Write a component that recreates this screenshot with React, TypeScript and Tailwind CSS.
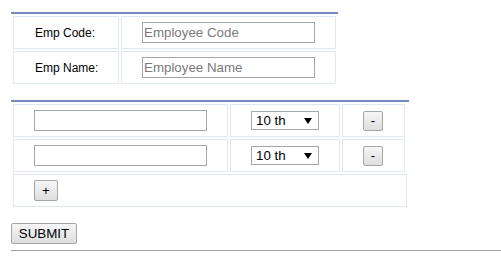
import React from "react";

const font = { fontFamily: '"Liberation Sans", Arial, sans-serif' };

function Btn({ label, w }: { label: string; w: string }) {
  return (
    <div
      className={`${w} h-[20px] flex items-center justify-center border border-[#a6a6a6] rounded-[2px] bg-gradient-to-b from-[#f6f6f6] to-[#dedede] text-[13.33px] text-black leading-none`}
    >
      {label}
    </div>
  );
}

function Select() {
  return (
    <div className="w-[68px] h-[19px] border border-[#a6a6a6] bg-white flex items-center pl-[4px] pr-[6px] text-[13.33px] text-black leading-none">
      <span className="flex-1">10 th</span>
      <svg width="8" height="6" viewBox="0 0 8 6">
        <path d="M0 0 H8 L4 6 Z" fill="#000" />
      </svg>
    </div>
  );
}

function TextInput({ placeholder }: { placeholder?: string }) {
  return (
    <div className="w-[173px] h-[21px] border border-[#a6a6a6] bg-white flex items-center pl-[1px] text-[13.33px] text-[#7a7a7a] leading-none">
      {placeholder ?? ""}
    </div>
  );
}

const cell = "border border-[#dfe7f5] flex items-center";

export default function App() {
  return (
    <div className="w-[501px] h-[259px] bg-white pl-[11px] pt-[12px]" style={font}>
      {/* Table 1 */}
      <div className="w-[327px] border-t-2 border-[#7689be] p-[2px] flex flex-col gap-[2px]">
        <div className="flex gap-[2px]">
          <div className={`${cell} w-[106px] h-[33px] pl-[21px] text-[12px] text-black`}>Emp Code:</div>
          <div className={`${cell} w-[215px] h-[33px] pl-[20px]`}>
            <TextInput placeholder="Employee Code" />
          </div>
        </div>
        <div className="flex gap-[2px]">
          <div className={`${cell} w-[106px] h-[33px] pl-[21px] text-[12px] text-black`}>Emp Name:</div>
          <div className={`${cell} w-[215px] h-[33px] pl-[20px]`}>
            <TextInput placeholder="Employee Name" />
          </div>
        </div>
      </div>

      {/* Table 2 */}
      <div className="mt-[14px] w-[398px] border-t-2 border-[#7689be] p-[2px] flex flex-col gap-[2px]">
        {[0, 1].map((i) => (
          <div key={i} className="flex gap-[2px]">
            <div className={`${cell} w-[215px] h-[33px] pl-[20px]`}>
              <TextInput />
            </div>
            <div className={`${cell} w-[110px] h-[33px] pl-[20px]`}>
              <Select />
            </div>
            <div className={`${cell} w-[63px] h-[33px] pl-[20px]`}>
              <Btn label="-" w="w-[20px]" />
            </div>
          </div>
        ))}
        <div className={`${cell} w-[394px] h-[33px] pl-[20px]`}>
          <div className="w-[24px] h-[21px] flex items-center justify-center border border-[#a6a6a6] rounded-[2px] bg-gradient-to-b from-[#f6f6f6] to-[#dedede] text-[13.33px] text-black leading-none">
            +
          </div>
        </div>
      </div>

      {/* Submit */}
      <div className="mt-[14px] w-[66px] h-[21px] flex items-center justify-center border border-[#a6a6a6] rounded-[2px] bg-gradient-to-b from-[#f6f6f6] to-[#dedede] text-[13.33px] text-black leading-none">
        SUBMIT
      </div>

      <div className="mt-[6px] h-[1px] bg-[#a0a0a0] w-[490px]" />
    </div>
  );
}
